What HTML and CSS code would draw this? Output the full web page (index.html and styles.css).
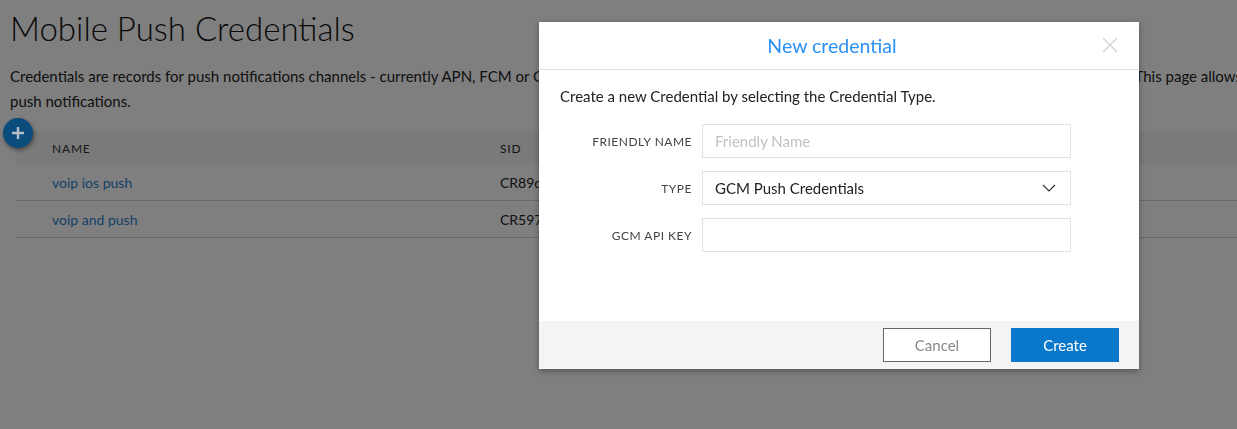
FILE: index.html
```html
<!DOCTYPE html>
<html>
<head>
<meta charset="utf-8">
<link rel="stylesheet" href="styles.css">
</head>
<body>
<div class="page">
  <h1 class="title">Mobile Push Credentials</h1>
  <p class="desc">Credentials are records for push notifications channels - currently APN, FCM or GCM. They hold the keys and certificates required to reach every mobile platform securely,  This page allows you to manage<br>push notifications.</p>
  <div class="table-wrap">
    <button class="add-btn" aria-label="Add">
      <svg width="14" height="14" viewBox="0 0 14 14"><path d="M7 1v12M1 7h12" stroke="#b4bec8" stroke-width="2.4" fill="none"/></svg>
    </button>
    <div class="table">
      <div class="row head">
        <div class="c-name">NAME</div>
        <div class="c-sid">SID</div>
      </div>
      <div class="row">
        <div class="c-name"><a class="link">voip ios push</a></div>
        <div class="c-sid">CR89d3c4e1a7f05b2c9e6d8a1f4b3c7e2d</div>
      </div>
      <div class="row">
        <div class="c-name"><a class="link">voip and push</a></div>
        <div class="c-sid">CR597a1e8c4d2f6b9a03c5e7d1f8b2a4c6</div>
      </div>
    </div>
  </div>
</div>
<div class="overlay"></div>
<div class="modal">
  <div class="modal-head">
    <h2 class="modal-title">New credential</h2>
    <span class="close">
      <svg width="16" height="16" viewBox="0 0 16 16"><path d="M1 1L15 15M15 1L1 15" stroke="#d2d2d2" stroke-width="1.3" fill="none"/></svg>
    </span>
  </div>
  <div class="modal-body">
    <p class="intro">Create a new Credential by selecting the Credential Type.</p>
    <div class="field">
      <label class="label">FRIENDLY NAME</label>
      <div class="input placeholder">Friendly Name</div>
    </div>
    <div class="field">
      <label class="label">TYPE</label>
      <div class="input select">
        <span>GCM Push Credentials</span>
        <svg width="14" height="8" viewBox="0 0 14 8"><path d="M1 1l6 6 6-6" stroke="#333" stroke-width="1.2" fill="none"/></svg>
      </div>
    </div>
    <div class="field">
      <label class="label">GCM API KEY</label>
      <div class="input"></div>
    </div>
  </div>
  <div class="modal-foot">
    <button class="btn cancel">Cancel</button>
    <button class="btn create">Create</button>
  </div>
</div>
</body>
</html>
```
FILE: styles.css
```css
* { box-sizing: border-box; }
html, body { margin: 0; padding: 0; }
body {
  font-family: Lato, "Open Sans", sans-serif;
  color: #222;
  background: #fff;
  width: 1237px;
  height: 429px;
  overflow: hidden;
}
.page { padding: 8px 0 0 10px; }
.title {
  margin: 0;
  font-weight: 300;
  font-size: 33px;
  line-height: 40px;
  color: #111;
}
.desc {
  margin: 16px 0 0 0;
  font-size: 15px;
  line-height: 25px;
  color: #222;
  white-space: pre;
  overflow: hidden;
}
.table-wrap {
  position: relative;
  margin-top: 17px;
}
.add-btn {
  position: absolute;
  z-index: 3;
  left: -7px;
  top: -13px;
  width: 30px;
  height: 30px;
  border-radius: 50%;
  border: none;
  background: #0a4c7c;
  box-shadow: 1px 2px 4px rgba(0,0,0,0.45);
  display: flex;
  align-items: center;
  justify-content: center;
  padding: 0;
}
.table { margin-left: 6px; }
.row {
  display: flex;
  height: 37px;
  align-items: center;
  border-bottom: 1px solid #d4d4d4;
  font-size: 14px;
}
.row.head {
  height: 33px;
  background: #f4f4f4;
  border-bottom: none;
  font-size: 12px;
  letter-spacing: 0.8px;
  color: #333;
  padding-top: 2px;
}
.c-name { width: 484px; padding-left: 36px; }
.c-sid { flex: 1; color: #222; white-space: nowrap; overflow: hidden; }
.link { color: #2d7fd0; text-decoration: none; }

.overlay {
  position: fixed;
  z-index: 2;
  inset: 0;
  background: rgba(0,0,0,0.5);
}
.modal {
  position: absolute;
  z-index: 4;
  left: 539px;
  top: 22px;
  width: 600px;
  background: #fff;
  box-shadow: 0 2px 6px rgba(0,0,0,0.35);
}
.modal-head {
  position: relative;
  height: 48px;
  border-bottom: 1px solid #e2e2e2;
  display: flex;
  align-items: center;
  justify-content: center;
  padding-right: 14px;
}
.modal-title {
  margin: 0;
  font-size: 19.5px;
  font-weight: 400;
  color: #2a8ff7;
}
.close {
  position: absolute;
  right: 21px;
  top: 15px;
  display: flex;
}
.modal-body {
  padding: 16px 21px 69px 21px;
}
.intro {
  margin: 0 0 18px 0;
  font-size: 15px;
  line-height: 20px;
  color: #222;
}
.field {
  display: flex;
  align-items: center;
  margin-bottom: 13px;
}
.field:last-child { margin-bottom: 0; }
.label {
  width: 142px;
  text-align: right;
  padding-right: 10px;
  font-size: 12px;
  letter-spacing: 0.5px;
  color: #444;
}
.input {
  width: 369px;
  height: 34px;
  border: 1px solid #e2e2e2;
  padding: 0 12px;
  display: flex;
  align-items: center;
  font-size: 15px;
  color: #222;
}
.placeholder { color: #c2c2c2; }
.select { justify-content: space-between; padding-right: 14px; }
.modal-foot {
  background: #f4f4f4;
  height: 48px;
  display: flex;
  justify-content: flex-end;
  align-items: center;
  gap: 20px;
  padding: 0 20px 0 0;
}
.btn {
  width: 108px;
  height: 34px;
  font-family: Lato, "Open Sans", sans-serif;
  font-size: 15px;
  cursor: pointer;
}
.cancel {
  background: #fff;
  border: 1px solid #666;
  color: #888;
}
.create {
  background: #0a78ca;
  border: none;
  color: #fff;
}
```
